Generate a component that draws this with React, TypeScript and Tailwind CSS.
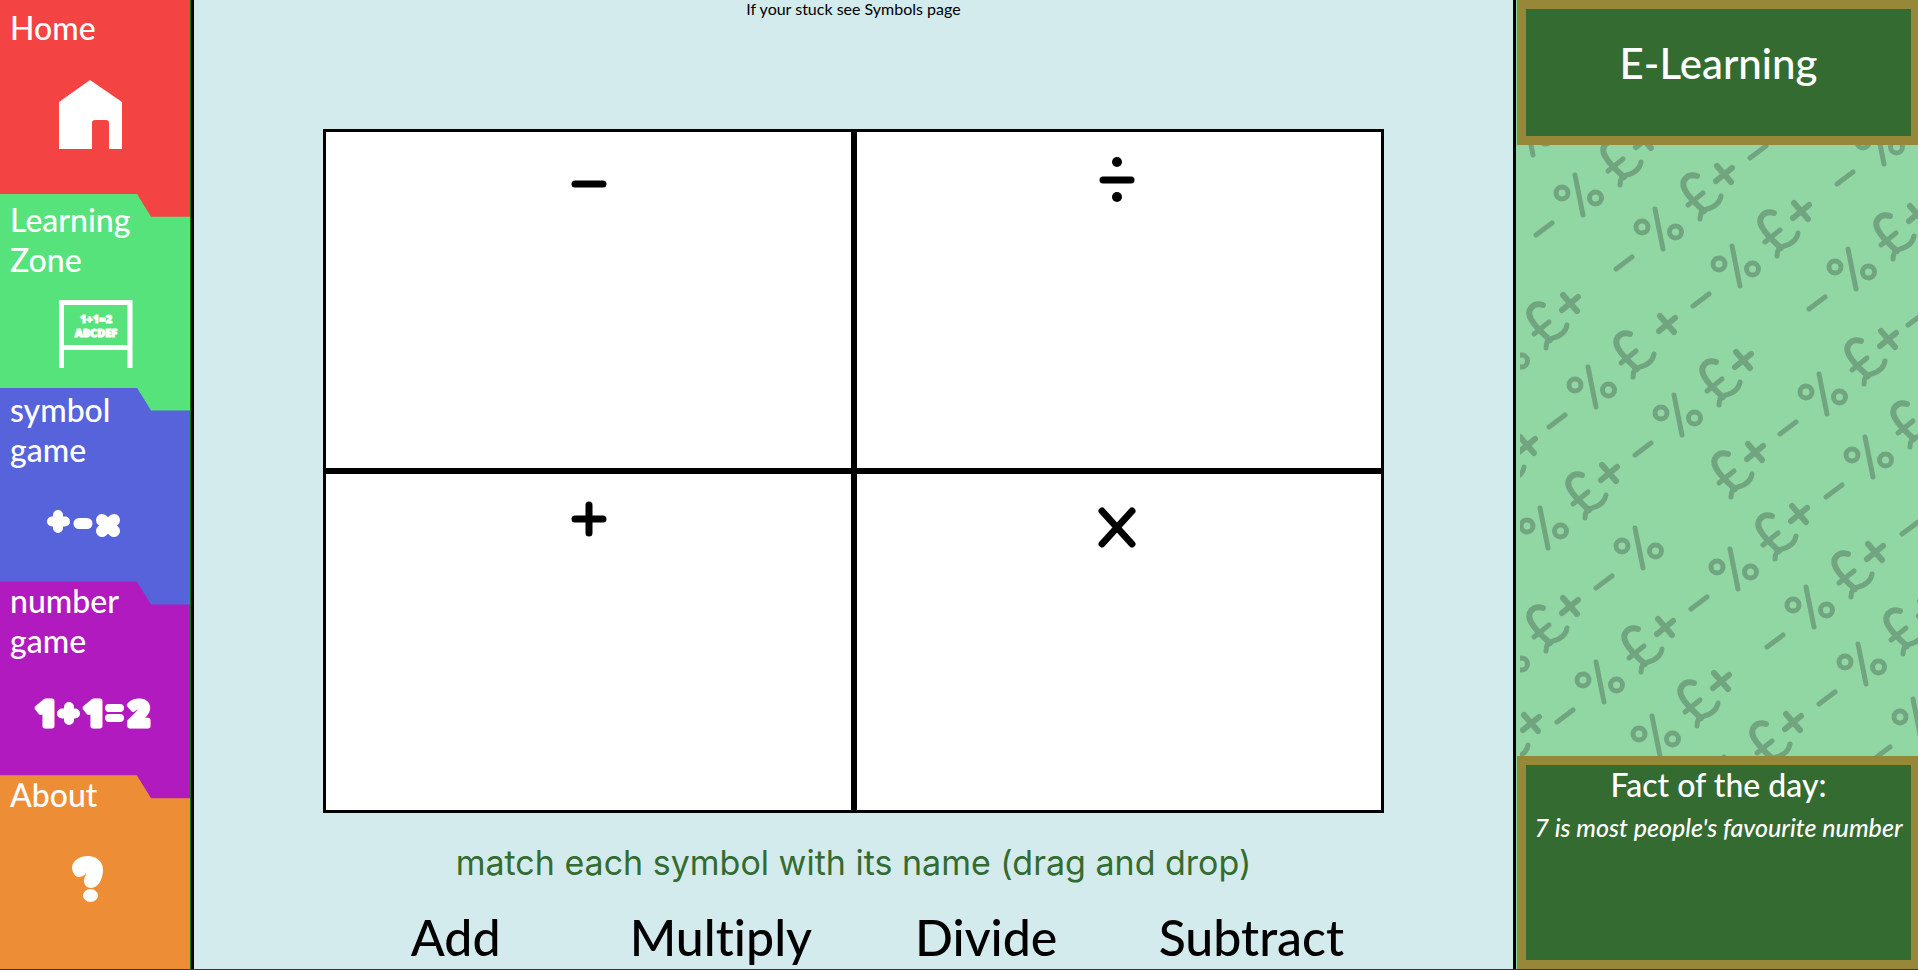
import type { ReactNode } from "react";

const BUBBLE = "font-['Open_Sans',sans-serif] font-extrabold";

function HomeIcon() {
  return (
    <svg viewBox="0 0 190 130" className="h-[130px] w-[190px]" aria-hidden="true">
      <path
        d="M59 38 L90 16 L122 38 V85 H109 V59 Q109 56 106 56 H95 Q92 56 92 59 V85 H59 Z"
        fill="white"
      />
    </svg>
  );
}

function BoardIcon() {
  return (
    <svg viewBox="0 0 190 110" className="h-[110px] w-[190px]" aria-hidden="true">
      <path d="M61.5 88 V22.5 H130 V88 M61.5 67.5 H130" fill="none" stroke="white" strokeWidth="5" />
      <g fill="white" stroke="white" strokeWidth="1" strokeLinejoin="round" textAnchor="middle" className={BUBBLE}>
        <text x="96" y="43" fontSize="11">1+1=2</text>
        <text x="96" y="57" fontSize="11">ABCDEF</text>
      </g>
    </svg>
  );
}

function SymbolsIcon() {
  return (
    <svg viewBox="0 0 190 110" className="h-[110px] w-[190px]" aria-hidden="true">
      <g fill="none" stroke="white" strokeLinecap="round">
        <path d="M58 44 V57 M52 50.5 H65" strokeWidth="10" />
        <path d="M79 52.5 H87" strokeWidth="11" />
        <path d="M102 49 L114 60 M114 49 L102 60" strokeWidth="12" />
      </g>
    </svg>
  );
}

function NumbersIcon() {
  return (
    <svg viewBox="0 0 190 110" className="h-[110px] w-[190px]" aria-hidden="true">
      <g fill="white" stroke="white" strokeWidth="5" strokeLinejoin="round" textAnchor="middle" fontSize="35" className={BUBBLE}>
        <text x="46" y="61">1</text>
        <text x="94" y="61">1</text>
        <text x="139" y="61">2</text>
      </g>
      <g fill="none" stroke="white" strokeLinecap="round">
        <path d="M69 42 V55 M62 48.5 H75" strokeWidth="10" />
        <path d="M109 43 H120 M109 53 H120" strokeWidth="8" />
      </g>
    </svg>
  );
}

function QuestionIcon() {
  return (
    <svg viewBox="0 -20 190 130" className="h-[130px] w-[190px]" aria-hidden="true">
      <path
        d="M72 8 C73 0 82 -3 88 -3 C96 -3 103 2 103 11 C103 20 98 29 91 29 C87 29 84 26 84 22 C84 18 86 17 86 14 C84 17 81 18 79 18 C75 18 72 13 72 8 Z"
        fill="white"
      />
      <ellipse cx="90.500" cy="36.500" rx="7.500" ry="6.500" fill="white" />
    </svg>
  );
}

type Tab = { label: ReactNode; icon: ReactNode; back: string; front: string };

const tabs: Tab[] = [
  { label: "Home", icon: <HomeIcon />, back: "bg-[#f34343]", front: "bg-[#f34343] pt-2" },
  { label: <>Learning<br />Zone</>, icon: <BoardIcon />, back: "bg-[#f34343]", front: "bg-[#56e37b] pt-1.5" },
  { label: <>symbol<br />game</>, icon: <SymbolsIcon />, back: "bg-[#56e37b]", front: "bg-[#5763db] pt-0.5" },
  { label: <>number<br />game</>, icon: <NumbersIcon />, back: "bg-[#5763db]", front: "bg-[#b01abe]" },
  { label: "About", icon: <QuestionIcon />, back: "bg-[#b01abe]", front: "bg-[#ed8e36]" },
];

function Sidebar() {
  return (
    <nav className="flex w-[194px] shrink-0 flex-col border-r-3 border-black">
      <div className="flex grow flex-col border-r border-[#0a7a0a]">
        {tabs.map((tab, i) => (
          <a key={i} href="#" className={`flex min-h-[193px] flex-1 flex-col ${tab.back}`}>
            <span
              className={`flex grow flex-col justify-between text-[32px] leading-10 font-medium text-white [clip-path:polygon(0_0,72%_0,79.500%_23px,100%_23px,100%_100%,0_100%)] ${tab.front}`}
            >
              <span className="pl-2.5">{tab.label}</span>
              {tab.icon}
            </span>
          </a>
        ))}
      </div>
    </nav>
  );
}

const zones = [
  { name: "Subtract", d: "M19 52 H47", dots: false },
  { name: "Divide", d: "M16 48 H44", dots: true },
  { name: "Add", d: "M19 45 H47 M33 31 V59", dots: false },
  { name: "Multiply", d: "M15 37 L45 70 M45 37 L15 70", dots: false },
];

const names = ["Add", "Multiply", "Divide", "Subtract"];

function Game() {
  return (
    <main className="flex grow flex-col items-stretch bg-[#d4ebed] px-[129px]">
      <p className="h-[129px] text-center text-base leading-[18px]">If your stuck see Symbols page</p>
      <div className="grid grid-cols-2">
        {zones.map((zone) => (
          <div key={zone.name} className="flex h-[342px] justify-center border-3 border-black bg-white">
            <svg viewBox="0 0 64 84" className="h-[84px] w-16" role="img" aria-label={zone.name}>
              <path d={zone.d} fill="none" stroke="black" strokeWidth="7" strokeLinecap="round" />
              {zone.dots && (
                <>
                  <circle cx="30" cy="30" r="5" />
                  <circle cx="30" cy="65" r="5" />
                </>
              )}
            </svg>
          </div>
        ))}
      </div>
      <p className="pt-7 text-center font-['Inter',sans-serif] text-[34px] leading-[44px] text-[#346b31]">
        match each symbol with its name (drag and drop)
      </p>
      <div className="grid grid-cols-4 pt-[22px]">
        {names.map((name) => (
          <button
            key={name}
            type="button"
            draggable
            className="cursor-grab text-[50px] leading-[60px] font-medium [font-variant-ligatures:none]"
          >
            {name}
          </button>
        ))}
      </div>
    </main>
  );
}

/* Centres of the percent signs; the other three symbols follow the same diagonal. */
const motifs = [
  [12, -10], [62, 50], [142, 84], [219, 121], [335, 124], [276, -27], [363, -1],
  [434, 140], [-12, 213], [161, 270], [306, 249], [352, 312], [27, 383],
  [217, 424], [293, 462], [345, 519], [400, 574], [-12, 516], [83, 537],
  [139, 591], [-51, 633], [211, 632], [-55, 355], [428, 349],
];

function PatternDefs() {
  return (
    <defs>
      <g id="percent-dash">
        <circle cx="-17" cy="-2" r="6" strokeWidth="5" />
        <circle cx="16.500" cy="3" r="6" strokeWidth="5" />
        <path d="M-4 -20 L4 20" strokeWidth="5" />
        <path d="M-43 40 L-27 28" strokeWidth="5" />
      </g>
      <g id="pound" strokeWidth="6">
        <path d="M38 -53 C28 -56 21 -48 26 -39 C29 -33 37 -25 45 -18" />
        <path d="M29 -24 L44 -36" strokeWidth="5" />
        <path d="M41 -10 C41 -16 43 -19 48 -20 C56 -22 61 -27 62 -33" strokeWidth="5" />
      </g>
      <path id="times" d="M58 -63 L72 -47 M73 -61 L57 -48" strokeWidth="6" />
    </defs>
  );
}

function Pattern() {
  return (
    <div className="min-h-[611px] grow overflow-hidden bg-[#90d7a4] pl-[3px]">
      <svg
        viewBox="3 0 398 611"
        preserveAspectRatio="xMinYMin slice"
        className="h-full w-full"
        fill="none"
        stroke="#71a580"
        strokeLinecap="round"
        strokeLinejoin="round"
        aria-hidden="true"
      >
        <PatternDefs />
        {motifs.map(([x, y]) => (
          <g key={`${x},${y}`} transform={`translate(${x} ${y})`}>
            <use href="#percent-dash" />
            <use href="#pound" />
            <use href="#times" />
          </g>
        ))}
        <g transform="translate(75 242)">
          <use href="#percent-dash" />
          <use href="#pound" />
          <use href="#times" x="10" y="-8" />
        </g>
        <use href="#percent-dash" x="122" y="403" />
        <use href="#pound" x="173" y="362" />
        <use href="#times" x="173" y="362" />
      </svg>
    </div>
  );
}

function SidePanel() {
  return (
    <aside className="flex w-[405px] shrink-0 flex-col border-l-3 border-black bg-[#90d7a4] pl-px text-white">
      <h1 className="flex h-[145px] items-center justify-center border-9 border-r-7 border-[#978839] bg-[#346b31] pb-5 text-[42px] leading-[52px] font-medium">
        E-Learning
      </h1>
      <Pattern />
      <section className="flex h-[213px] flex-col border-9 border-r-7 border-[#978839] bg-[#346b31] text-center font-medium">
        <h2 className="text-[32px] leading-10">Fact of the day:</h2>
        <p className="text-[25px] leading-[44px] whitespace-nowrap italic">7 is most people's favourite number</p>
      </section>
    </aside>
  );
}

export default function App() {
  return (
    <div className="flex min-h-screen flex-col font-['Lato',sans-serif] text-black">
      <div className="flex grow">
        <Sidebar />
        <Game />
        <SidePanel />
      </div>
      <div className="h-px bg-[#4a2c40]" />
    </div>
  );
}
